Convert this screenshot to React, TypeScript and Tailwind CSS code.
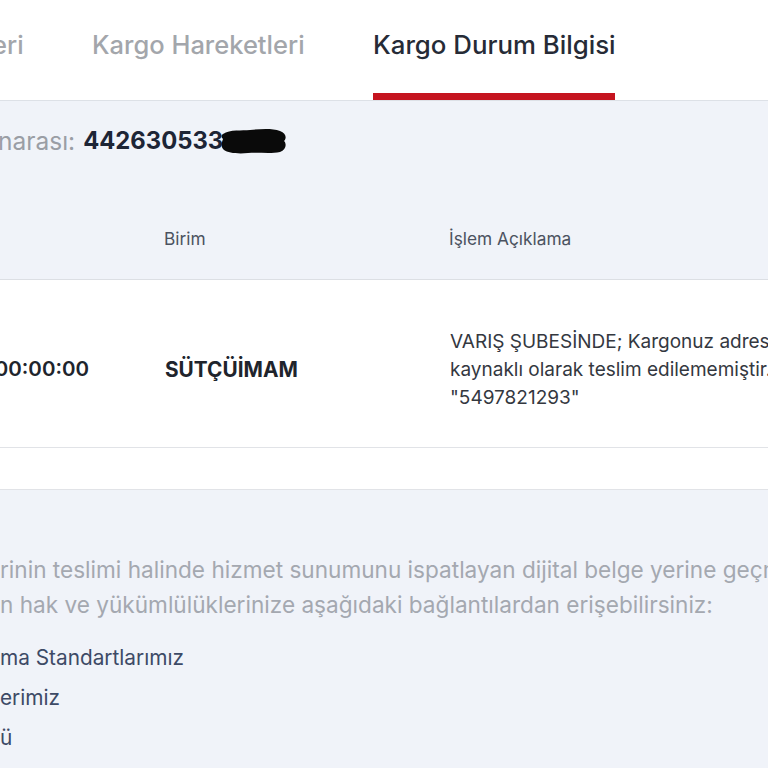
function Blot() {
  return (
    <svg width="68" height="28" viewBox="0 0 68 28" className="-ml-[3px] shrink-0">
      <path
        d="M3 7 C10 2 22 4 30 3 C40 2 52 1 60 4 C66 6 67 11 64 14 C67 17 66 23 60 25 C50 27 38 25 28 26 C18 27 8 26 4 23 C0 19 2 15 3 12 C1 10 1 8 3 7 Z"
        fill="#0a0a0a"
      />
    </svg>
  )
}

export default function App() {
  return (
    <div className="w-[768px] h-[768px] overflow-hidden bg-white font-['Inter',sans-serif]">
      {/* Tabs */}
      <div className="flex h-[101px] border-b border-[#dde1e7] whitespace-nowrap">
        <div className="h-[100px] pt-[28px] w-[100px] shrink-0 -ml-[8px] text-[25.5px] leading-[34px] font-medium text-[#a3a6ab]">
          eri
        </div>
        <div className="h-[100px] pt-[28px] w-[281px] shrink-0 text-[25.5px] leading-[34px] font-medium text-[#a3a6ab]">
          Kargo Hareketleri
        </div>
        <div className="h-[100px] pt-[28px] w-[242px] shrink-0 border-b-[7px] border-[#c5141f] text-[25.8px] leading-[34px] font-medium text-[#262b36]">
          Kargo Durum Bilgisi
        </div>
      </div>

      {/* Info + table header */}
      <div className="bg-[#f0f3f9] border-b border-[#dcdfe4]">
        <div className="pt-[26px] flex items-center h-[54px] whitespace-nowrap">
          <span className="text-[24.5px] leading-[28px] text-[#9a9ea5] -ml-[2px]">narası:</span>
          <span className="ml-[8px] text-[23.8px] leading-[28px] font-bold text-[#1d2536]">442630533</span>
          <Blot />
        </div>
        <div className="flex mt-[73px] pb-[29px] text-[17.3px] leading-[22px] text-[#4b5260] whitespace-nowrap">
          <div className="w-[164px] shrink-0" />
          <div className="w-[285px] shrink-0">Birim</div>
          <div>İşlem Açıklama</div>
        </div>
      </div>

      {/* Row */}
      <div className="flex items-center h-[168px] pt-[12px] border-b border-[#e1e3e7] whitespace-nowrap">
        <div className="w-[175px] -ml-[10px] shrink-0 pr-[76px] text-right text-[20.5px] font-semibold text-[#20242c]">00:00:00</div>
        <div className="w-[285px] shrink-0 text-[20.8px] font-bold text-[#20242c]">SÜTÇÜİMAM</div>
        <div className="text-[19px] leading-[28px] text-[#34383f]">
          VARIŞ ŞUBESİNDE; Kargonuz adresinden
          <br />
          kaynaklı olarak teslim edilememiştir. Detaylı bilgi
          <br />
          "5497821293"
        </div>
      </div>

      <div className="h-[42px] border-b border-[#e1e3e7]" />

      {/* Bottom info */}
      <div className="bg-[#f0f3f9] h-[300px] pt-[62px] whitespace-nowrap">
        <p className="text-[22.6px] leading-[35px] text-[#a4a8b0]">
          rinin teslimi halinde hizmet sunumunu ispatlayan dijital belge yerine geçmektedir.
          <br />
          n hak ve yükümlülüklerinize aşağıdaki bağlantılardan erişebilirsiniz:
        </p>
        <div className="mt-[16px] flex flex-col text-[20.8px] leading-[40px] text-[#3d4a66]">
          <span>ma Standartlarımız</span>
          <span>erimiz</span>
          <span>ü</span>
        </div>
      </div>
    </div>
  )
}
